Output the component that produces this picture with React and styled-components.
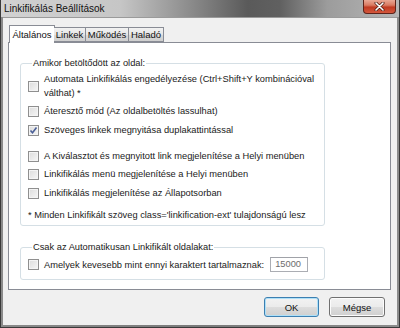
import React from "react";
import styled, { createGlobalStyle } from "styled-components";

const Global = createGlobalStyle`
  html, body { margin: 0; padding: 0; background: #6e6e6e; }
  body { font-family: "Liberation Sans", Arial, sans-serif; font-size: 9.3px; color: #1a1a1a; }
`;

const Window = styled.div`
  width: 400px;
  height: 328px;
  box-sizing: border-box;
  display: flex;
  flex-direction: column;
  background: linear-gradient(90deg, #8a8a8a, #7a7a7a 50%, #8c8c8c);
  border: 1px solid #3a3a3a;
  border-top: none;
  padding: 0 2px 2px 2px;
`;

const TitleBar = styled.div`
  height: 17px;
  margin: 0 -2px;
  display: flex;
  align-items: flex-start;
  justify-content: space-between;
  background: linear-gradient(90deg, #d2d2d2 0%, #c6c6c6 30%, #8a8a8a 48%, #5a5a5a 62%, #606060 70%, #9c9c9c 82%, #b6b6b6 100%);
`;

const Title = styled.span`
  padding: 3px 0 0 3px;
  font-size: 10px;
  color: #111;
`;

const CloseButton = styled.div`
  width: 33px;
  height: 14px;
  margin-right: 3px;
  box-sizing: border-box;
  border: 1px solid #5c231a;
  border-top: none;
  border-radius: 0 0 4px 4px;
  background: linear-gradient(180deg, #e9a895 0%, #d97a62 40%, #c03a22 55%, #d4573c 100%);
  display: flex;
  align-items: center;
  justify-content: center;
`;

const Client = styled.div`
  flex: 1;
  background: #f0f0f0;
  padding: 7px 5px 0 5px;
  display: flex;
  flex-direction: column;
  border-top: 1px solid #9a9a9a;
`;

const TabStrip = styled.div`
  display: flex;
  align-items: flex-end;
  height: 17px;
  padding-left: 2px;
  position: relative;
  z-index: 1;
`;

const Tab = styled.div`
  box-sizing: border-box;
  height: ${p => (p.$active ? "18px" : "15px")};
  margin-bottom: ${p => (p.$active ? "-1px" : "0")};
  margin-left: ${p => (p.$active ? "-1px" : "0")};
  margin-right: ${p => (p.$active ? "-1px" : "0")};
  padding: 0 ${p => (p.$active ? "4px" : "3px")};
  width: ${p => p.$w}px;
  display: flex;
  align-items: center;
  justify-content: center;
  border: 1px solid #898c95;
  border-bottom: ${p => (p.$active ? "none" : "1px solid #898c95")};
  border-left-width: ${p => (p.$first || p.$active ? "1px" : "0")};
  background: ${p => (p.$active ? "#fff" : "linear-gradient(180deg, #f2f2f2, #e6e6e6 50%, #dadada 51%, #cfcfcf)")};
  font-size: 9.5px;
  color: #111;
`;

const Panel = styled.div`
  width: 383px;
  height: 248px;
  box-sizing: border-box;
  background: #fff;
  border: 1px solid #898c95;
  padding: 14px 0 0 11px;
  display: flex;
  flex-direction: column;
  gap: 15px;
`;

const Group = styled.fieldset`
  width: 305px;
  box-sizing: border-box;
  margin: 0;
  border: 1px solid #d5dfe5;
  border-radius: 3px;
  padding: ${p => p.$pad};
  display: flex;
  flex-direction: column;
`;

const Legend = styled.legend`
  padding: 0 1px;
  margin-left: 4px;
  line-height: 12px;
  color: #1a1a1a;
`;

const Row = styled.label`
  display: flex;
  align-items: center;
  gap: 5px;
  line-height: 14px;
  margin-top: ${p => p.$mt || 0}px;
`;

const Box = styled.span`
  flex: none;
  width: 11px;
  height: 11px;
  box-sizing: border-box;
  border: 1px solid #8f8f8f;
  background: linear-gradient(135deg, #dcdcdc, #f6f6f6);
  box-shadow: inset 0 0 0 1px #f4f4f4;
  display: flex;
  align-items: center;
  justify-content: center;
`;

const Note = styled.div`
  line-height: 14px;
  margin-top: 8px;
`;

const Input = styled.div`
  width: 38px;
  height: 15px;
  box-sizing: border-box;
  border: 1px solid #abadb3;
  border-top-color: #a0a2a8;
  padding-left: 4px;
  line-height: 13px;
  color: #6d6d6d;
  margin-left: 1px;
`;

const Footer = styled.div`
  display: flex;
  justify-content: flex-end;
  gap: 10px;
  padding: 7px 7px 0 0;
`;

const Button = styled.div`
  width: ${p => p.$w}px;
  height: 20px;
  box-sizing: border-box;
  border: 1px solid ${p => (p.$default ? "#3c7fb1" : "#707070")};
  border-radius: 3px;
  background: linear-gradient(180deg, #f2f2f2 0%, #ebebeb 50%, #dddddd 51%, #cfcfcf 100%);
  box-shadow: ${p => (p.$default ? "inset 0 0 0 1px #aee0f8" : "inset 0 0 0 1px #fcfcfc")};
  display: flex;
  align-items: center;
  justify-content: center;
  font-size: 9.5px;
  color: #111;
`;

const Check = ({ checked }) => (
  <Box>
    {checked && (
      <svg width="9" height="9" viewBox="0 0 9 9">
        <path d="M1.5 4.5 L3.5 6.8 L7.5 1.5" fill="none" stroke="#4a5f97" strokeWidth="1.6" />
      </svg>
    )}
  </Box>
);

const CheckRow = ({ checked, mt, children }) => (
  <Row $mt={mt}>
    <Check checked={checked} />
    <span>{children}</span>
  </Row>
);

const tabs = [
  { name: "Általános", w: 46, active: true },
  { name: "Linkek", w: 32 },
  { name: "Működés", w: 43 },
  { name: "Haladó", w: 35 },
];

export default function App() {
  return (
    <>
      <Global />
      <Window>
        <TitleBar>
          <Title>Linkifikálás Beállítások</Title>
          <CloseButton>
            <svg width="11" height="9" viewBox="0 0 11 9">
              <path d="M2 1 L9 8 M9 1 L2 8" stroke="#4a1a12" strokeWidth="3" strokeLinecap="round" />
              <path d="M2 1 L9 8 M9 1 L2 8" stroke="#ffffff" strokeWidth="1.6" strokeLinecap="round" />
            </svg>
          </CloseButton>
        </TitleBar>
        <Client>
          <TabStrip>
            {tabs.map((t, i) => (
              <Tab key={t.name} $active={t.active} $first={i === 0} $w={t.w}>
                {t.name}
              </Tab>
            ))}
          </TabStrip>
          <Panel>
            <Group $pad="3px 6px 3px 7px">
              <Legend>Amikor betöltődött az oldal:</Legend>
              <CheckRow>
                Automata Linkifikálás engedélyezése (Ctrl+Shift+Y kombinációval
                <br />
                válthat) *
              </CheckRow>
              <CheckRow mt={4}>Áteresztő mód (Az oldalbetöltés lassulhat)</CheckRow>
              <CheckRow mt={5} checked>
                Szöveges linkek megnyitása duplakattintással
              </CheckRow>
              <CheckRow mt={12}>A Kiválasztot és megnyitott link megjelenítése a Helyi menüben</CheckRow>
              <CheckRow mt={4}>Linkifikálás menü megjelenítése a Helyi menüben</CheckRow>
              <CheckRow mt={5}>Linkifikálás megjelenítése az Állapotsorban</CheckRow>
              <Note>* Minden Linkifikált szöveg class='linkification-ext' tulajdonságú lesz</Note>
            </Group>
            <Group $pad="4px 6px 7px 7px">
              <Legend>Csak az Automatikusan Linkifikált oldalakat:</Legend>
              <Row>
                <Check />
                <span>Amelyek kevesebb mint ennyi karaktert tartalmaznak:</span>
                <Input>15000</Input>
              </Row>
            </Group>
          </Panel>
          <Footer>
            <Button $w={55} $default>OK</Button>
            <Button $w={56}>Mégse</Button>
          </Footer>
        </Client>
      </Window>
    </>
  );
}
